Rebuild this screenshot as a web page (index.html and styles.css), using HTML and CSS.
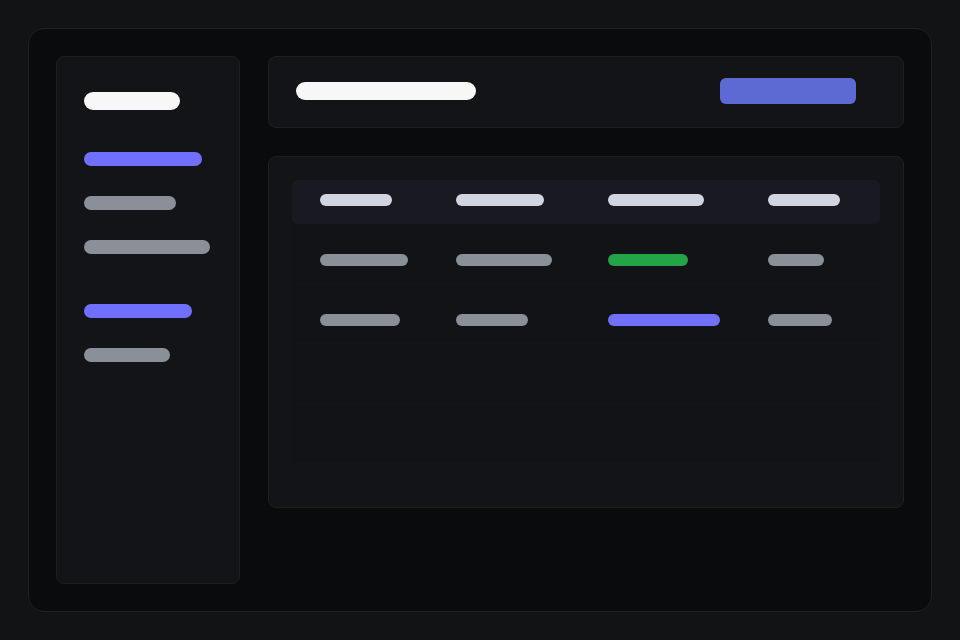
FILE: index.html
```html
<!DOCTYPE html>
<html lang="en">
<head>
<meta charset="utf-8">
<title>Dashboard skeleton</title>
<link rel="stylesheet" href="styles.css">
</head>
<body>
<div class="frame">
  <aside class="sidebar">
    <div class="bar bar-title logo"></div>
    <nav class="nav">
      <div class="nav-group">
        <div class="bar nav-item accent w118"></div>
        <div class="bar nav-item muted w92"></div>
        <div class="bar nav-item muted w126"></div>
      </div>
      <div class="nav-group">
        <div class="bar nav-item accent w108"></div>
        <div class="bar nav-item muted w86"></div>
      </div>
    </nav>
  </aside>
  <main class="main">
    <header class="card topbar">
      <div class="bar bar-title page-title"></div>
      <div class="btn"></div>
    </header>
    <section class="card table-card">
      <div class="row head">
        <div class="cell"><div class="bar hbar w72"></div></div>
        <div class="cell"><div class="bar hbar w88"></div></div>
        <div class="cell"><div class="bar hbar w96"></div></div>
        <div class="cell"><div class="bar hbar w72"></div></div>
      </div>
      <div class="row">
        <div class="cell"><div class="bar muted w88"></div></div>
        <div class="cell"><div class="bar muted w96"></div></div>
        <div class="cell"><div class="bar success w80"></div></div>
        <div class="cell"><div class="bar muted w56"></div></div>
      </div>
      <div class="row">
        <div class="cell"><div class="bar muted w80"></div></div>
        <div class="cell"><div class="bar muted w72"></div></div>
        <div class="cell"><div class="bar accent w112"></div></div>
        <div class="cell"><div class="bar muted w64"></div></div>
      </div>
      <div class="row empty"></div>
      <div class="row empty"></div>
    </section>
  </main>
</div>
</body>
</html>
```

FILE: styles.css
```css
* { box-sizing: border-box; }

html, body {
  margin: 0;
  height: 100%;
}

body {
  background: #121315;
  padding: 28px;
  font-family: "Inter", "Liberation Sans", sans-serif;
}

.frame {
  width: 904px;
  height: 584px;
  background: #0a0b0d;
  border: 1px solid #1e1f23;
  border-radius: 16px;
  padding: 27px;
  display: grid;
  grid-template-columns: 184px 1fr;
  column-gap: 28px;
}

.card {
  background: #131417;
  border: 1px solid #1e2024;
  border-radius: 8px;
}

.sidebar {
  background: #131417;
  border: 1px solid #1e2024;
  border-radius: 8px;
  padding: 35px 27px;
  height: 528px;
}

.bar {
  height: 14px;
  border-radius: 7px;
}

.bar-title {
  height: 18px;
  border-radius: 9px;
  background: #f7f7f7;
}

.logo { width: 96px; }
.page-title { width: 180px; }

.nav {
  margin-top: 42px;
  display: flex;
  flex-direction: column;
  gap: 50px;
}

.nav-group {
  display: flex;
  flex-direction: column;
  gap: 30px;
}

.accent { background: #7070ff; }
.muted { background: #8b8f97; }
.success { background: #22a447; }

.main {
  display: flex;
  flex-direction: column;
  gap: 28px;
}

.topbar {
  height: 72px;
  display: flex;
  align-items: center;
  justify-content: space-between;
  padding: 0 47px 2px 27px;
}

.btn {
  width: 136px;
  height: 26px;
  border-radius: 6px;
  background: #5e6ad3;
}

.table-card {
  height: 352px;
  padding: 23px;
}

.row {
  display: grid;
  grid-template-columns: 136px 152px 160px 1fr;
  padding: 30px 28px 18px;
  height: 60px;
  background: #121317;
  border-bottom: 1px solid #141519;
}

.row.head {
  height: 44px;
  padding: 14px 28px 0;
  background: #191a21;
  border-radius: 6px;
  border-bottom: none;
}

.hbar {
  height: 12px;
  border-radius: 6px;
  background: #d1d5e0;
}

.row .bar { height: 12px; border-radius: 6px; }

.w56 { width: 56px; }
.w64 { width: 64px; }
.w72 { width: 72px; }
.w80 { width: 80px; }
.w86 { width: 86px; }
.w88 { width: 88px; }
.w92 { width: 92px; }
.w96 { width: 96px; }
.w108 { width: 108px; }
.w112 { width: 112px; }
.w118 { width: 118px; }
.w126 { width: 126px; }
```
